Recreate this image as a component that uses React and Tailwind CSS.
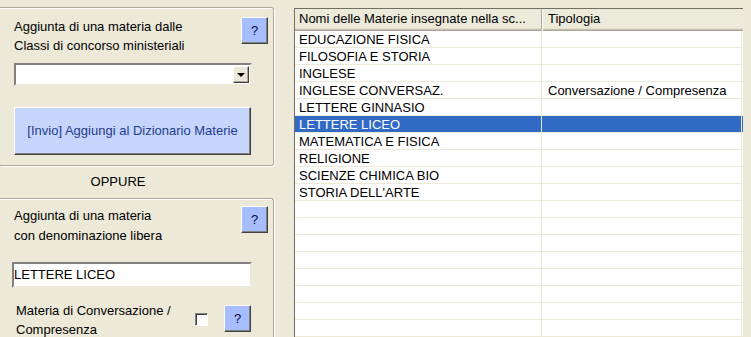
import React from "react";

const materie = [
  { nome: "EDUCAZIONE FISICA", tipo: "" },
  { nome: "FILOSOFIA E STORIA", tipo: "" },
  { nome: "INGLESE", tipo: "" },
  { nome: "INGLESE CONVERSAZ.", tipo: "Conversazione / Compresenza" },
  { nome: "LETTERE GINNASIO", tipo: "" },
  { nome: "LETTERE LICEO", tipo: "", selected: true },
  { nome: "MATEMATICA E FISICA", tipo: "" },
  { nome: "RELIGIONE", tipo: "" },
  { nome: "SCIENZE CHIMICA BIO", tipo: "" },
  { nome: "STORIA DELL'ARTE", tipo: "" },
];

const rows = [...materie, ...Array.from({ length: 9 }, () => ({ nome: "", tipo: "" }))];

const HelpButton = ({ className = "" }) => (
  <button
    className={
      "w-[27px] h-[27px] shrink-0 bg-[#A6BDFF] border border-t-white border-l-white border-r-[#404040] border-b-[#404040] shadow-[inset_-1px_-1px_0_#808080] text-[13px] leading-[20px] text-[#0a0a3a] flex items-center justify-center " +
      className
    }
  >
    ?
  </button>
);

const App = () => {
  return (
    <div
      className="w-[751px] h-[337px] overflow-hidden bg-[#ECE9D8] flex text-[13px] text-black"
      style={{ fontFamily: '"Liberation Sans", Arial, sans-serif' }}
    >
      {/* colonna sinistra */}
      <div className="w-[274px] shrink-0 flex flex-col">
        <div className="shrink-0 mt-[7px] h-[159px] w-[274px] border-t border-r border-b border-[#ACA899] rounded-r-[3px] shadow-[1px_1px_0_#fff,inset_0_1px_0_#fff] pl-[14px] pr-[5px] pt-[9px]">
          <div className="flex justify-between items-start">
            <div className="leading-[19px] whitespace-nowrap">
              Aggiunta di una materia dalle
              <br />
              Classi di concorso ministeriali
            </div>
            <HelpButton />
          </div>
          <div className="mt-[8px] w-[238px] h-[23px] bg-white border-2 border-t-[#808080] border-l-[#808080] border-r-[#ECE9D8] border-b-[#ECE9D8] flex justify-end p-[1px]">
            <div className="w-[16px] h-full bg-[#ECE9D8] border border-t-white border-l-white border-r-[#404040] border-b-[#404040] shadow-[inset_-1px_-1px_0_#ACA899] flex items-center justify-center">
              <div className="w-0 h-0 border-l-[4px] border-r-[4px] border-t-[4px] border-l-transparent border-r-transparent border-t-black" />
            </div>
          </div>
          <button className="mt-[21px] w-[237px] h-[48px] bg-[#C6D5FC] border border-t-white border-l-white border-r-[#404040] border-b-[#404040] shadow-[inset_-1px_-1px_0_#808080] text-[#1F3C8C] leading-[20px] whitespace-nowrap">
            [Invio] Aggiungi al Dizionario Materie
          </button>
        </div>

        <div className="shrink-0 h-[32px] w-[236px] text-center leading-[32px]">OPPURE</div>

        <div className="shrink-0 h-[160px] w-[274px] border-t border-r border-[#ACA899] rounded-tr-[3px] shadow-[1px_0_0_#fff,inset_0_1px_0_#fff] pl-[14px] pr-[5px] pt-[7px]">
          <div className="flex justify-between items-start">
            <div className="leading-[20px] whitespace-nowrap">
              Aggiunta di una materia
              <br />
              con denominazione libera
            </div>
            <HelpButton />
          </div>
          <div className="mt-[16px] -ml-[2px] w-[240px] h-[26px] bg-white border-2 border-t-[#808080] border-l-[#808080] border-r-[#ECE9D8] border-b-[#ECE9D8] leading-[21px] whitespace-nowrap">
            LETTERE LICEO
          </div>
          <div className="mt-[13px] flex items-start">
            <div className="ml-[2px] w-[179px] leading-[19px] whitespace-nowrap">
              Materia di Conversazione /
              <br />
              Compresenza
            </div>
            <div className="mt-[12px] w-[13px] h-[13px] bg-white border border-t-[#808080] border-l-[#808080] border-r-white border-b-white shadow-[inset_1px_1px_0_#404040]" />
            <HelpButton className="ml-[16px] mt-[4px]" />
          </div>
        </div>
      </div>

      {/* elenco materie */}
      <div className="shrink-0 ml-[20px] mt-[8px] w-[449px] h-[340px] bg-white border-l border-t border-[#716F64] overflow-hidden">
        <div className="h-[22px] flex bg-[#EBEADB] shadow-[inset_0_-1px_0_#ACA899,inset_0_-2px_0_#C5C2B2,inset_0_-3px_0_#E2DECD] leading-[19px] whitespace-nowrap">
          <div className="w-[247px] pl-[4px] border-r border-[#ACA899]">Nomi delle Materie insegnate nella sc...</div>
          <div className="w-[200px] pl-[5px] border-l border-white">Tipologia</div>
        </div>
        {rows.map((r, i) => (
          <div
            key={i}
            className={
              "h-[17px] flex border-b border-[#ECE9D8] leading-[18px] whitespace-nowrap " +
              (r.selected ? "bg-[#316AC5] text-white" : "")
            }
          >
            <div className="w-[247px] pl-[4px] border-r border-[#ECE9D8]">{r.nome}</div>
            <div className="w-[200px] pl-[6px] border-r border-[#ECE9D8]">{r.tipo}</div>
          </div>
        ))}
      </div>
    </div>
  );
};

export default App;
